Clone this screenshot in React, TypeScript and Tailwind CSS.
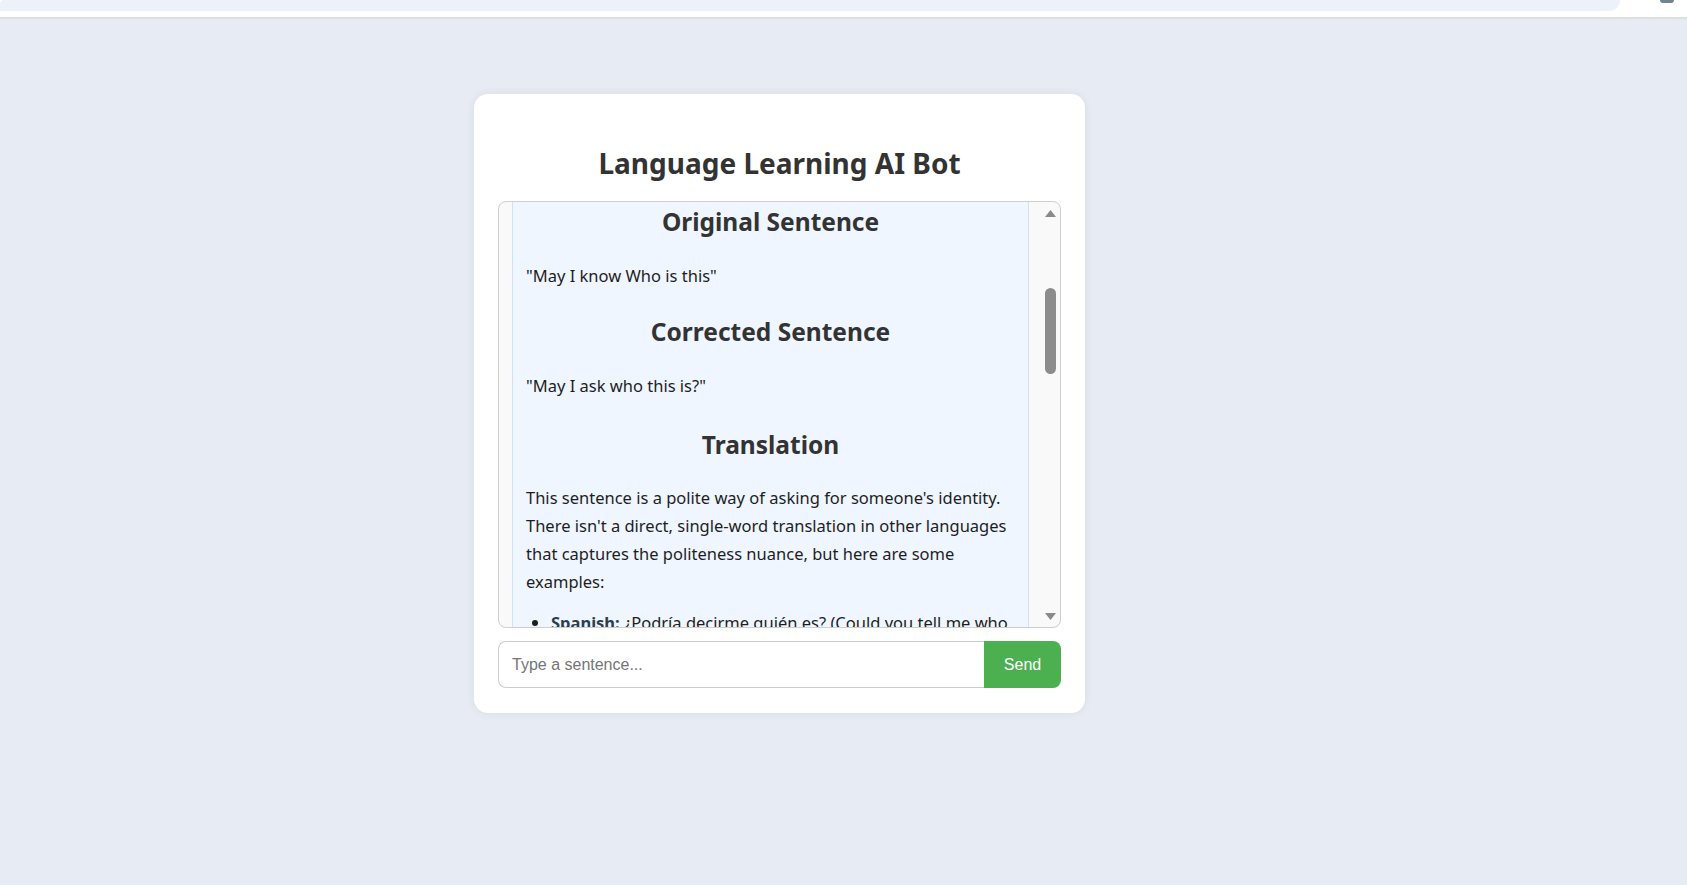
import { useState } from "react";

function ScrollArrow({ down }: { down?: boolean }) {
  return (
    <svg width="11" height="7" viewBox="0 0 11 7" className="mx-auto block">
      <path d={down ? "M0 0h11L5.5 7z" : "M5.5 0L11 7H0z"} fill="#8a8a8a" />
    </svg>
  );
}

export default function App() {
  const [text, setText] = useState("");

  return (
    <div className="min-h-[885px] bg-[#e7ebf3] font-['Noto_Sans',sans-serif]">
      {/* top strip */}
      <div className="h-[19px] bg-white border-b-2 border-[#dcdfe4] flex items-start">
        <div className="w-[1620px] h-[11px] bg-[#edf2fa] rounded-br-[10px] rounded-tl-[4px]" />
        <div className="ml-auto mr-[13px] w-[14px] h-[3px] rounded-b-full bg-[#6f8593]" />
      </div>

      <div className="ml-[474px] mt-[75px] w-[611px] bg-white rounded-[14px] shadow-[0_0_10px_rgba(0,0,0,0.07)] px-6 pt-[50px] pb-[25px]">
        <h1 className="text-center text-[28px] leading-[38px] font-bold text-[#333]">Language Learning AI Bot</h1>

        <div className="mt-[19px] h-[427px] border border-[#cfcfcf] rounded-[8px] bg-[#f9f9f9] flex overflow-hidden">
          <div className="pl-[13px] flex-1 overflow-hidden">
            <div className="w-[517px] min-h-full bg-[#eff6ff] border-x border-[#cfe1f7] px-[13px] pt-[4px] text-[16.5px] text-[#1e1e1e]">
              <h2 className="text-center text-[24.5px] leading-[32px] font-bold text-[#333] mb-[24px]">Original Sentence</h2>
              <p className="leading-[28px] mb-[26px]">"May I know Who is this"</p>
              <h2 className="text-center text-[24.5px] leading-[32px] font-bold text-[#333] mb-[24px]">Corrected Sentence</h2>
              <p className="leading-[28px] mb-[29px]">"May I ask who this is?"</p>
              <h2 className="text-center text-[24.5px] leading-[32px] font-bold text-[#333] mb-[23px]">Translation</h2>
              <p className="leading-[28px]">
                This sentence is a polite way of asking for someone's identity. There isn't a direct, single-word translation in other languages that captures the politeness nuance, but here are some examples:
              </p>
              <ul className="mt-[13px] pl-[25px] list-disc leading-[28px]">
                <li>
                  <strong className="text-[#2c3e50]">Spanish:</strong> ¿Podría decirme quién es? (Could you tell me who it is?)
                </li>
                <li>
                  <strong className="text-[#2c3e50]">French:</strong> Puis-je savoir qui c'est ?
                </li>
              </ul>
            </div>
          </div>
          {/* scrollbar */}
          <div className="ml-[12px] w-[19px] flex flex-col">
            <div className="mt-[8px]">
              <ScrollArrow />
            </div>
            <div className="mt-[71px] mx-auto w-[11px] h-[86px] rounded-full bg-[#8c8c8c]" />
            <div className="flex-1" />
            <div className="mb-[7px]">
              <ScrollArrow down />
            </div>
          </div>
        </div>

        <div className="mt-[13px] flex h-[47px]">
          <input
            value={text}
            onChange={(e) => setText(e.target.value)}
            placeholder="Type a sentence..."
            className="flex-1 min-w-0 border border-r-0 border-[#cccccc] rounded-l-[8px] px-[13px] text-[16px] font-['Liberation_Sans',sans-serif] text-[#222] placeholder:text-[#757575] outline-none bg-white"
          />
          <button className="w-[77px] bg-[#4caf50] text-white text-[16px] font-['Liberation_Sans',sans-serif] rounded-r-[8px]">
            Send
          </button>
        </div>
      </div>
    </div>
  );
}
